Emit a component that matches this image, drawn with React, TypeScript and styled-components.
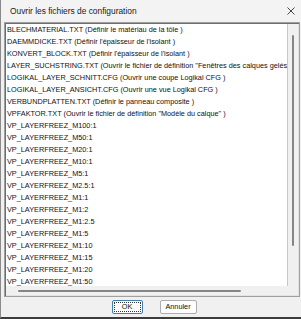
import React from "react";
import styled, { createGlobalStyle } from "styled-components";

const GlobalStyle = createGlobalStyle`
  html, body {
    margin: 0;
    padding: 0;
    background: #f0f0f0;
  }
  * {
    box-sizing: border-box;
  }
`;

const Window = styled.div`
  width: 301px;
  height: 319px;
  display: flex;
  flex-direction: column;
  background: #f0f0f0;
  border-left: 1px solid #8a8a8a;
  border-bottom: 2px solid #3c3c3c;
  font-family: "Liberation Sans", Arial, sans-serif;
  overflow: hidden;
`;

const TitleBar = styled.div`
  height: 21px;
  flex: none;
  display: flex;
  align-items: center;
  justify-content: space-between;
  padding: 1px 6px 0 9px;
  background: #f3f3f3;
  color: #1a1a1a;
  font-size: 8.4px;
`;

const CloseIcon = styled.svg`
  width: 8px;
  height: 8px;
  display: block;
`;

const Body = styled.div`
  flex: 1;
  display: flex;
  flex-direction: column;
  padding: 1px 1px 0 3px;
`;

const ListBox = styled.div`
  height: 275px;
  display: grid;
  grid-template-columns: 1fr 10px;
  grid-template-rows: 1fr 9px;
  border: 1px solid #a0a0a0;
  box-shadow: inset 1px 1px 0 #6d6d6d, inset -1px -1px 0 #e3e3e3;
  padding: 1px 1px 1px 1px;
  background: #f0f0f0;
`;

const Items = styled.ul`
  list-style: none;
  margin: 0;
  padding: 0 0 0 1px;
  background: #ffffff;
  border-right: 1px solid #c8c8c8;
  overflow: hidden;
`;

const Item = styled.li`
  height: 12px;
  line-height: 12px;
  font-size: 7.3px;
  color: #111;
  white-space: nowrap;
`;

const VScroll = styled.div`
  display: flex;
  justify-content: center;
  padding-top: 11px;
  background: #f0f0f0;
`;

const VThumb = styled.div`
  width: 2px;
  height: 211px;
  background: #858585;
  border-radius: 1px;
`;

const HScroll = styled.div`
  display: flex;
  align-items: center;
  padding-left: 12px;
  background: #f0f0f0;
`;

const HThumb = styled.div`
  width: 223px;
  height: 2px;
  background: #858585;
  border-radius: 1px;
`;

const Corner = styled.div`
  background: #f0f0f0;
`;

const Footer = styled.div`
  flex: 1;
  display: flex;
  justify-content: center;
  align-items: center;
  gap: 17px;
  padding: 0 0 1px 4px;
`;

const Button = styled.button<{ $default?: boolean }>`
  height: 14px;
  width: ${(p) => (p.$default ? "31px" : "37px")};
  padding: 0;
  font-family: "Liberation Sans", Arial, sans-serif;
  font-size: 7.3px;
  color: #111;
  background: #fdfdfd;
  border: 1px solid ${(p) => (p.$default ? "#3c7fb1" : "#adadad")};
  border-radius: 2px;
  outline: ${(p) => (p.$default ? "1px dotted #333" : "none")};
  outline-offset: -3px;
`;

const items = [
  "BLECHMATERIAL.TXT (Définir le matériau de la tôle )",
  "DAEMMDICKE.TXT (Définir l'épaisseur de l'isolant )",
  "KONVERT_BLOCK.TXT (Définir l'épaisseur de l'isolant )",
  "LAYER_SUCHSTRING.TXT (Ouvrir le fichier de définition \"Fenêtres des calques gelés\" )",
  "LOGIKAL_LAYER_SCHNITT.CFG (Ouvrir une coupe Logikal CFG )",
  "LOGIKAL_LAYER_ANSICHT.CFG (Ouvrir une vue Logikal CFG )",
  "VERBUNDPLATTEN.TXT (Définir le panneau composite )",
  "VPFAKTOR.TXT (Ouvrir le fichier de définition \"Modèle du calque\" )",
  "VP_LAYERFREEZ_M100:1",
  "VP_LAYERFREEZ_M50:1",
  "VP_LAYERFREEZ_M20:1",
  "VP_LAYERFREEZ_M10:1",
  "VP_LAYERFREEZ_M5:1",
  "VP_LAYERFREEZ_M2.5:1",
  "VP_LAYERFREEZ_M1:1",
  "VP_LAYERFREEZ_M1:2",
  "VP_LAYERFREEZ_M1:2.5",
  "VP_LAYERFREEZ_M1:5",
  "VP_LAYERFREEZ_M1:10",
  "VP_LAYERFREEZ_M1:15",
  "VP_LAYERFREEZ_M1:20",
  "VP_LAYERFREEZ_M1:50",
];

const App = () => {
  return (
    <Window>
      <GlobalStyle />
      <TitleBar>
        <span>Ouvrir les fichiers de configuration</span>
        <CloseIcon viewBox="0 0 8 8">
          <path d="M0.5 0.5 L7.5 7.5 M7.5 0.5 L0.5 7.5" stroke="#333" strokeWidth="0.9" />
        </CloseIcon>
      </TitleBar>
      <Body>
        <ListBox>
          <Items>
            {items.map((t) => (
              <Item key={t}>{t}</Item>
            ))}
          </Items>
          <VScroll>
            <VThumb />
          </VScroll>
          <HScroll>
            <HThumb />
          </HScroll>
          <Corner />
        </ListBox>
        <Footer>
          <Button $default>OK</Button>
          <Button>Annuler</Button>
        </Footer>
      </Body>
    </Window>
  );
};

export default App;
